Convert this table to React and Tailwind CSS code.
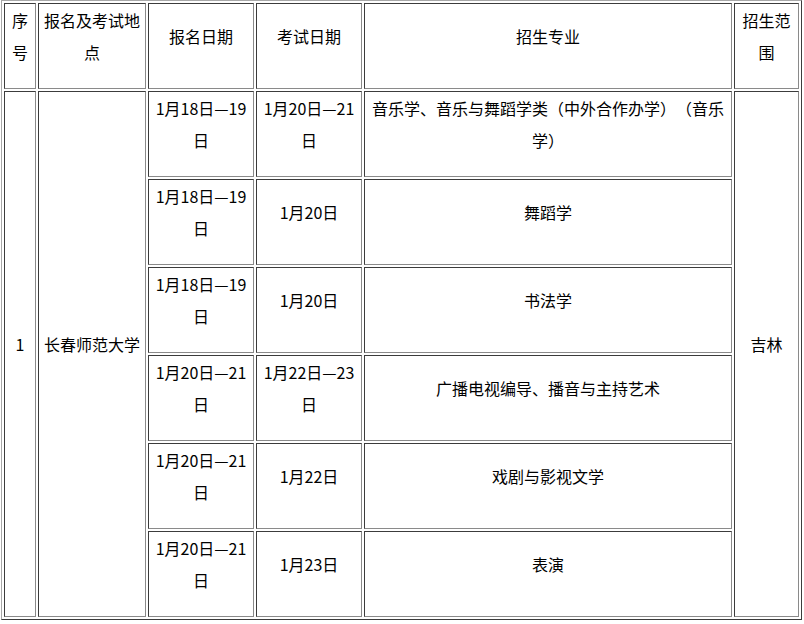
import React from 'react';

const rows = [
  { signup: '1月18日—19日', exam: '1月20日—21日', major: '音乐学、音乐与舞蹈学类（中外合作办学）（音乐学）' },
  { signup: '1月18日—19日', exam: '1月20日', major: '舞蹈学' },
  { signup: '1月18日—19日', exam: '1月20日', major: '书法学' },
  { signup: '1月20日—21日', exam: '1月22日—23日', major: '广播电视编导、播音与主持艺术' },
  { signup: '1月20日—21日', exam: '1月22日', major: '戏剧与影视文学' },
  { signup: '1月20日—21日', exam: '1月23日', major: '表演' },
];

// inset cell border, text sits a bit above the middle like the original page
const cell =
  'border border-t-[#3c3c3c] border-l-[#3c3c3c] border-b-[#8a8a8a] border-r-[#8a8a8a] px-[5px] pt-0 pb-[20px] align-middle text-center';

const App = () => {
  return (
    <div className="min-h-screen bg-white pl-px text-black text-[16px] leading-[32px] [text-spacing-trim:space-all] font-['Noto_Sans_CJK_SC','Microsoft_YaHei',sans-serif]">
      <table className="w-[801px] table-fixed border-separate border-spacing-[2px] border border-t-[#a8a8a8] border-l-[#a8a8a8] border-b-[#3c3c3c] border-r-[#3c3c3c]">
        <colgroup>
          <col className="w-[32px]" />
          <col className="w-[108px]" />
          <col className="w-[106px]" />
          <col className="w-[106px]" />
          <col className="w-[368px]" />
          <col className="w-[65px]" />
        </colgroup>
        <thead>
          <tr className="h-[86px]">
            <th className={`${cell} font-normal`}>序号</th>
            <th className={`${cell} font-normal`}>报名及考试地点</th>
            <th className={`${cell} font-normal`}>报名日期</th>
            <th className={`${cell} font-normal`}>考试日期</th>
            <th className={`${cell} font-normal`}>招生专业</th>
            <th className={`${cell} font-normal`}>招生范围</th>
          </tr>
        </thead>
        <tbody>
          {rows.map((row, i) => (
            <tr key={i} className="h-[86px]">
              {i === 0 && (
                <>
                  <td rowSpan={6} className={cell}>1</td>
                  <td rowSpan={6} className={cell}>长春师范大学</td>
                </>
              )}
              <td className={cell}>{row.signup}</td>
              <td className={cell}>{row.exam}</td>
              <td className={cell}>{row.major}</td>
              {i === 0 && (
                <td rowSpan={6} className={cell}>吉林</td>
              )}
            </tr>
          ))}
        </tbody>
      </table>
    </div>
  );
};

export default App;
